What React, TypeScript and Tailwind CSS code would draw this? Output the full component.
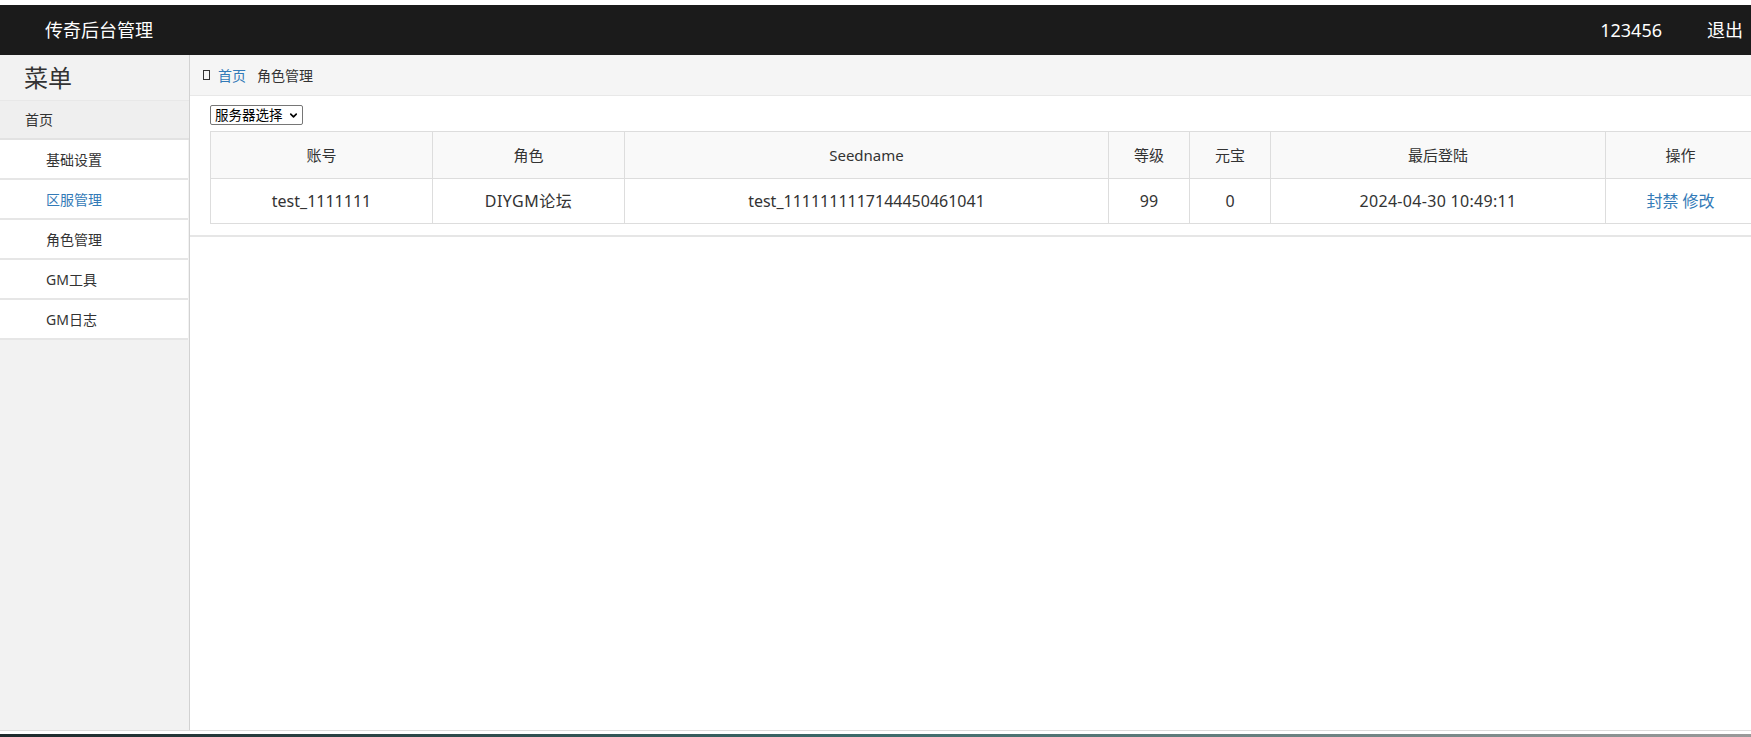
import { ChevronDown } from "lucide-react";

const font = { fontFamily: '"Noto Sans", "Noto Sans CJK SC", sans-serif' };

const menu = [
  { label: "基础设置", active: false },
  { label: "区服管理", active: true },
  { label: "角色管理", active: false },
  { label: "GM工具", active: false },
  { label: "GM日志", active: false },
];

const columns = [
  { title: "账号", w: "w-[222px]" },
  { title: "角色", w: "w-[192px]" },
  { title: "Seedname", w: "w-[484px]" },
  { title: "等级", w: "w-[81px]" },
  { title: "元宝", w: "w-[81px]" },
  { title: "最后登陆", w: "w-[335px]" },
  { title: "操作", w: "w-[150px]" },
];

const rows = [
  {
    account: "test_1111111",
    role: "DIYGM论坛",
    seed: "test_1111111117144450461041",
    level: 99,
    gold: 0,
    lastLogin: "2024-04-30 10:49:11",
  },
];

function Sidebar() {
  return (
    <aside className="flex w-[190px] shrink-0 flex-col border-r border-[#d2d2d2] bg-[#f2f2f2]">
      <div className="flex h-[45px] items-center pl-[24px] text-[24px] text-[#333]">菜单</div>
      <div className="flex h-[40px] items-center border-t border-b-2 border-t-[#e8e8e8] border-b-[#e2e2e2] bg-[#efefef] pl-[25px] text-[14px] text-[#333]">
        首页
      </div>
      {menu.map((m) => (
        <div
          key={m.label}
          className={`mr-[1px] flex h-[40px] items-center border-b-2 border-[#e6e6e6] bg-white pl-[46px] text-[14px] ${
            m.active ? "text-[#337ab7]" : "text-[#333]"
          }`}
        >
          {m.label}
        </div>
      ))}
    </aside>
  );
}

function RoleTable() {
  return (
    <table className="w-[1545px] table-fixed border-collapse text-[#333]">
      <thead>
        <tr className="h-[47px] bg-[#f9f9f9] text-[15px]">
          {columns.map((c) => (
            <th key={c.title} className={`${c.w} border border-[#dddddd] text-center font-normal`}>
              {c.title}
            </th>
          ))}
        </tr>
      </thead>
      <tbody>
        {rows.map((r) => (
          <tr key={r.account} className="h-[45px] bg-white text-[16px]">
            <td className="border border-[#dddddd] text-center">{r.account}</td>
            <td className="border border-[#dddddd] text-center tracking-[0.5px]">{r.role}</td>
            <td className="border border-[#dddddd] text-center">{r.seed}</td>
            <td className="border border-[#dddddd] text-center">{r.level}</td>
            <td className="border border-[#dddddd] text-center">{r.gold}</td>
            <td className="border border-[#dddddd] text-center tracking-[0.3px]">{r.lastLogin}</td>
            <td className="border border-[#dddddd] text-center text-[#337ab7]">
              <a className="cursor-pointer">封禁</a> <a className="cursor-pointer">修改</a>
            </td>
          </tr>
        ))}
      </tbody>
    </table>
  );
}

export default function App() {
  return (
    <div className="flex h-[737px] w-[1751px] flex-col overflow-hidden bg-white" style={font}>
      <div className="h-[5px] shrink-0 bg-white" />
      <header className="flex h-[50px] shrink-0 items-center bg-[#1b1b1b] pl-[45px] pr-[8px] text-[18px] text-white">
        <span>传奇后台管理</span>
        <span className="ml-auto">123456</span>
        <span className="ml-[45px]">退出</span>
      </header>

      <div className="flex h-[675px] shrink-0">
        <Sidebar />
        <main className="min-w-0 flex-1 overflow-hidden">
          <div className="flex h-[41px] items-center gap-[8px] border-b border-[#e8e8e8] bg-[#f5f5f5] pl-[13px] text-[14px] text-[#333]">
            <span className="h-[10px] w-[7px] border-[1.5px] border-[#333]" />
            <a className="text-[#337ab7]">首页</a>
            <span className="ml-[3px]">角色管理</span>
          </div>
          <div className="border-b-2 border-[#e6e6e6] pt-[9px] pb-[11px] pl-[20px]">
            <div className="relative mb-[6px] w-[93px]">
              <select className="block h-[20px] w-[93px] appearance-none rounded-[2px] border border-[#767676] bg-white pl-[4px] text-[13.5px] leading-[18px] text-black">
                <option>服务器选择</option>
              </select>
              <ChevronDown
                className="pointer-events-none absolute top-[5px] right-[4px] h-[11px] w-[11px] text-black"
                strokeWidth={3.5}
              />
            </div>
            <RoleTable />
          </div>
        </main>
      </div>

      <div className="h-[1px] shrink-0 bg-[#dcdcdc]" />
      <div className="h-[3px] shrink-0 bg-white" />
      <div className="flex-1 bg-gradient-to-r from-[#1e2a2c] via-[#3d6b6b] to-[#9a9a9a]" />
    </div>
  );
}
